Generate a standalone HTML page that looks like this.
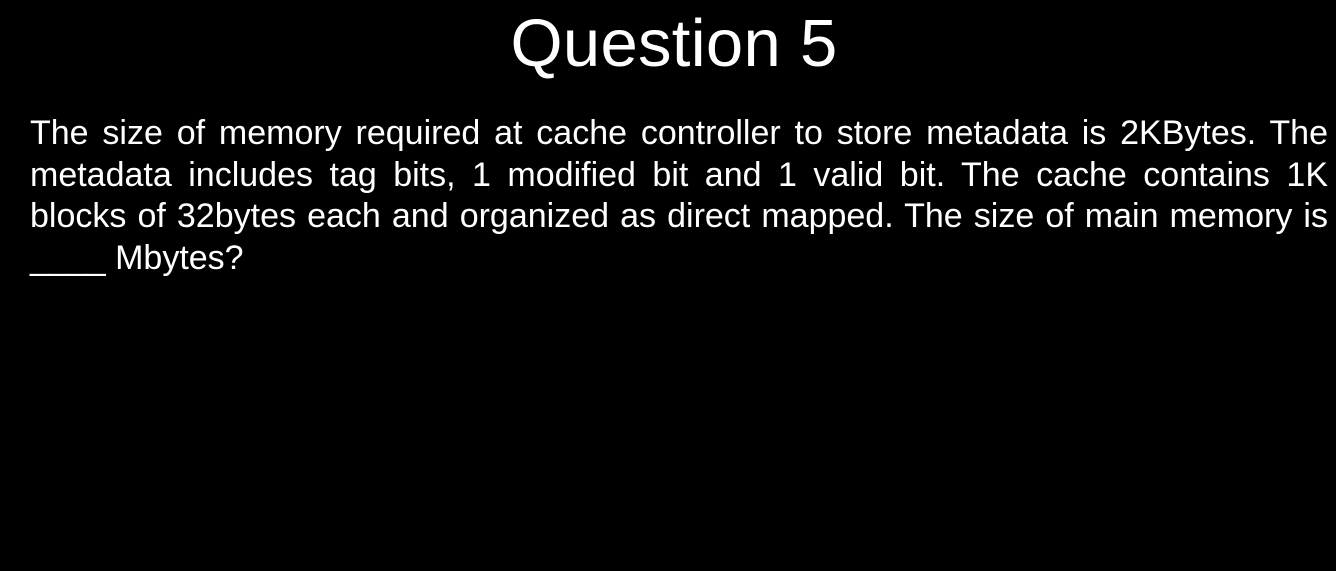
<!DOCTYPE html>
<html><head><style>
html,body{margin:0;padding:0;background:#000;width:1336px;height:571px;overflow:hidden}
body{font-family:"Liberation Sans",Arial,sans-serif;color:#fff;position:relative}
h1{position:absolute;left:0;width:1348px;top:4px;margin:0;text-align:center;font-weight:normal;font-size:67px;line-height:80px;letter-spacing:0.3px}
.p{position:absolute;left:30px;width:1298px;top:113px;font-size:34px;line-height:41.5px}
.l{text-align:justify;text-align-last:justify;white-space:nowrap;height:41.5px}
.l.last{text-align:left;text-align-last:left}
</style></head><body>
<h1>Question 5</h1>
<div class="p">
<div class="l">The size of memory required at cache controller to store metadata is 2KBytes. The</div>
<div class="l">metadata includes tag bits, 1 modified bit and 1 valid bit. The cache contains 1K</div>
<div class="l">blocks of 32bytes each and organized as direct mapped. The size of main memory is</div>
<div class="l last">____ Mbytes?</div>
</div>
</body></html>
